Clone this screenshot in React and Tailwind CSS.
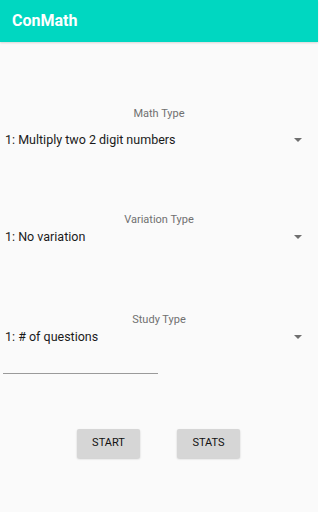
const Spinner = ({ label, value, labelGap }) => (
  <div>
    <div className="text-center text-[11px] leading-[14px] text-[#707070]">{label}</div>
    <div className={`flex h-[20px] items-center justify-between pl-[5px] pr-[16px] ${labelGap}`}>
      <span className="text-[12.5px] text-[#1a1a1a]">{value}</span>
      <span className="h-0 w-0 border-x-[4px] border-t-[4px] border-x-transparent border-t-[#6f6f6f]"></span>
    </div>
  </div>
);

export default function App() {
  return (
    <div className="h-[512px] w-[318px] bg-[#fafafa] font-['Roboto',sans-serif]">
      <div className="flex h-[42px] items-center bg-[#00d7c1] px-[12px] shadow-[0_1px_2px_rgba(0,0,0,0.15)]">
        <span className="text-[16px] font-bold text-white">ConMath</span>
      </div>

      <div className="pt-[65px]">
        <Spinner label="Math Type" value="1: Multiply two 2 digit numbers" labelGap="mt-[9px]" />
        <div className="mt-[63px]">
          <Spinner label="Variation Type" value="1: No variation" labelGap="mt-0" />
        </div>
        <div className="mt-[66px]">
          <Spinner label="Study Type" value="1: # of questions" labelGap="mt-0" />
        </div>

        <div className="ml-[3px] mt-[26px] h-px w-[155px] bg-[#9a9a9a]"></div>

        <div className="mt-[55px] flex pl-[77px] gap-[37px]">
          <button className="h-[29px] w-[63px] rounded-[2px] bg-[#d6d6d6] text-[11px] font-normal text-[#111] shadow-[0_1px_2px_rgba(0,0,0,0.2)]">
            START
          </button>
          <button className="h-[29px] w-[63px] rounded-[2px] bg-[#d6d6d6] text-[11px] font-normal text-[#111] shadow-[0_1px_2px_rgba(0,0,0,0.2)]">
            STATS
          </button>
        </div>
      </div>
    </div>
  );
}
